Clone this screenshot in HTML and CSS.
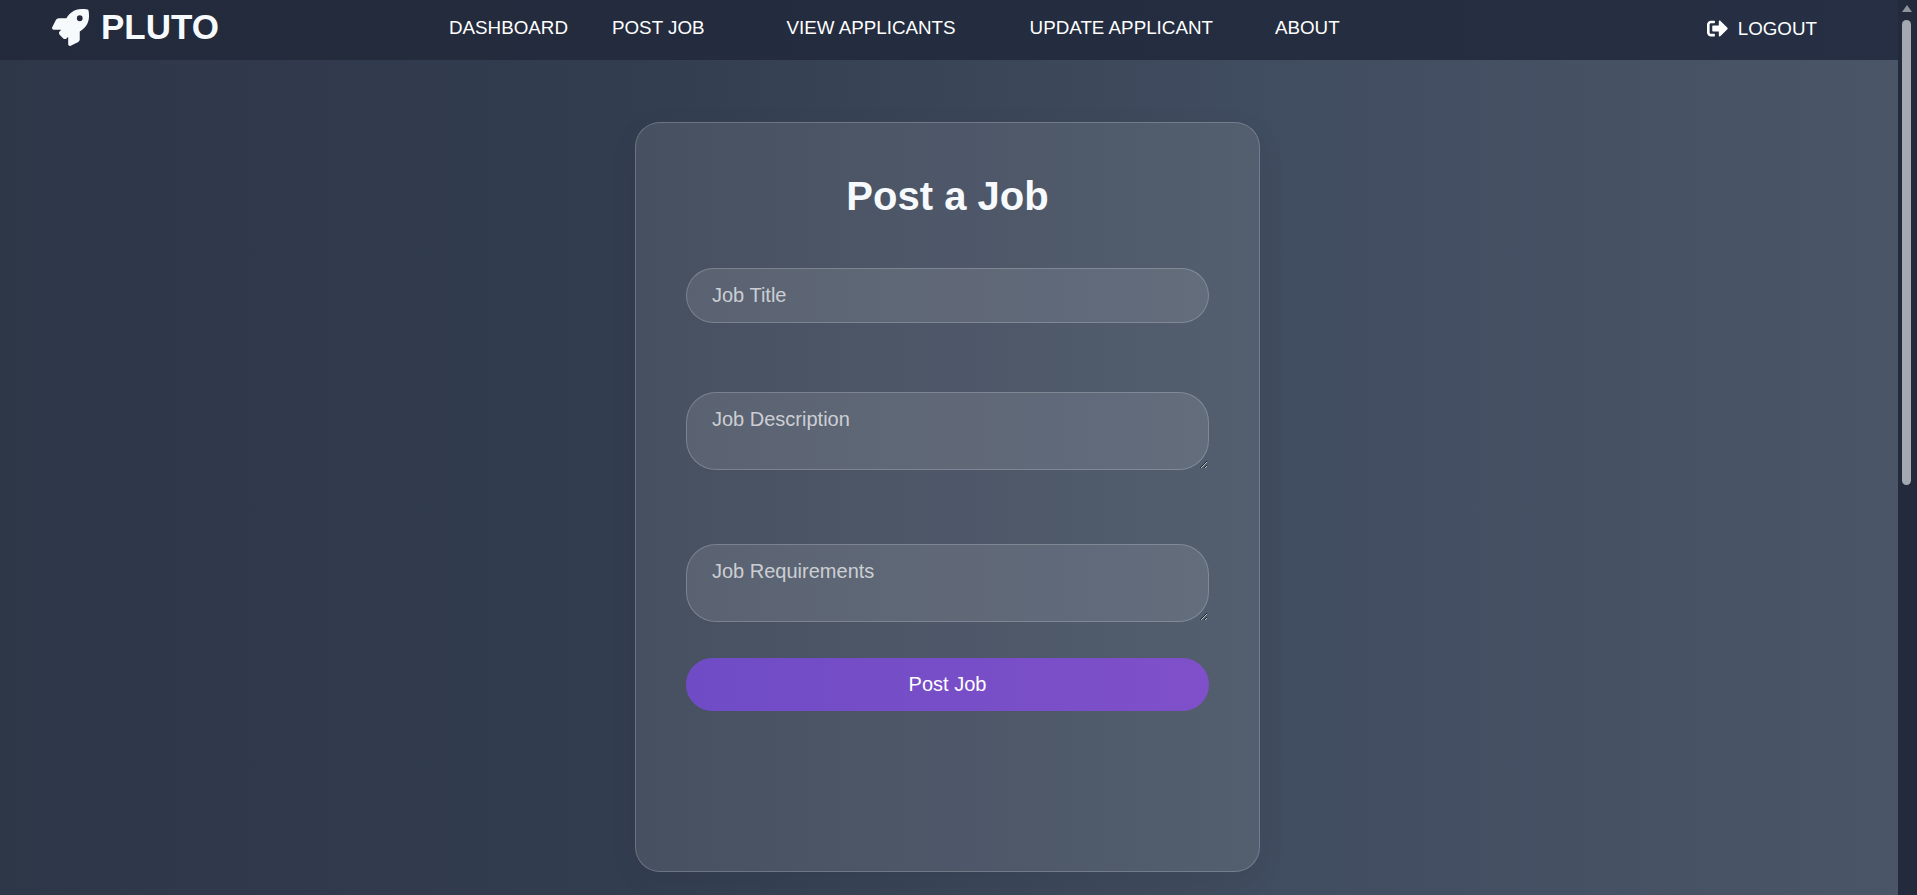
FILE: index.html
```html
<!DOCTYPE html>
<html lang="en">
<head>
    <meta charset="UTF-8">
    <meta name="viewport" content="width=device-width, initial-scale=1.0">
    <title>Post a Job</title>
    <link rel="stylesheet" href="styles.css">
</head>
<body>
    <div class="page">
        <nav class="navbar">
            <a class="brand" href="#">
                <svg class="brand-icon" viewBox="0 0 512 512"><path d="M505.12 19.09c-1.19-5.53-6.66-11-12.21-12.19C460.72 0 435.51 0 410.41 0 307.18 0 245.27 55.2 199.05 128H94.84c-16.35.02-35.56 11.88-42.89 26.48L2.52 253.3A28.4 28.4 0 0 0 0 264a24 24 0 0 0 24.01 24h103.81l-22.47 22.47c-11.37 11.36-13 32.26 0 45.25l50.9 50.91c11.16 11.19 32.16 13.16 45.28 0l22.47-22.47V488a24 24 0 0 0 24.01 24 28.56 28.56 0 0 0 10.71-2.52l98.73-49.39c14.63-7.3 26.51-26.5 26.51-42.86V312.8c72.6-46.31 128.03-108.41 128.03-211.1.03-25.2.03-50.4-6.92-82.61zM384.04 168a40 40 0 1 1 40.01-40 40 40 0 0 1-40.01 40z"/></svg>
                PLUTO
            </a>
            <ul class="nav-links">
                <li><a href="#">DASHBOARD</a></li>
                <li class="nav-post"><a href="#">POST JOB</a></li>
                <li class="nav-view"><a href="#">VIEW APPLICANTS</a></li>
                <li class="nav-update"><a href="#">UPDATE APPLICANT</a></li>
                <li class="nav-about"><a href="#">ABOUT</a></li>
            </ul>
            <a class="logout" href="#">
                <svg class="logout-icon" viewBox="0 0 512 512"><path d="M497 273L329 441c-15 15-41 4.5-41-17v-96H152c-13.3 0-24-10.7-24-24v-96c0-13.3 10.7-24 24-24h136V88c0-21.4 25.9-32 41-17l168 168c9.3 9.4 9.3 24.6 0 34zM192 436v-40c0-6.6-5.4-12-12-12H96c-17.7 0-32-14.3-32-32V160c0-17.7 14.3-32 32-32h84c6.6 0 12-5.4 12-12V76c0-6.6-5.4-12-12-12H96c-53 0-96 43-96 96v192c0 53 43 96 96 96h84c6.6 0 12-5.4 12-12z"/></svg>
                LOGOUT
            </a>
        </nav>

        <main class="content">
            <div class="card">
                <h1>Post a Job</h1>
                <form>
                    <input class="field" type="text" placeholder="Job Title">
                    <textarea class="field area" rows="2" placeholder="Job Description"></textarea>
                    <textarea class="field area" rows="2" placeholder="Job Requirements"></textarea>
                    <button class="submit" type="button">Post Job</button>
                </form>
            </div>
        </main>
    </div>

    <div class="scrollbar">
        <div class="scroll-arrow"></div>
        <div class="scroll-thumb"></div>
    </div>
</body>
</html>
```

FILE: styles.css
```css
* {
    box-sizing: border-box;
}

body {
    display: flex;
    margin: 0;
    height: 100vh;
    overflow: hidden;
    font-family: "Liberation Sans", Arial, sans-serif;
    color: #f7fafc;
}

a {
    color: #fff;
    text-decoration: none;
}

.page {
    flex: 1;
    background: linear-gradient(to right, #2d3748 0%, #333d50 33%, #404c5f 66%, #4a5568 100%);
}

.navbar {
    display: flex;
    align-items: center;
    height: 60px;
    padding: 0 81px 6px 52px;
    background: linear-gradient(to right, #222a3b, #262f43);
}

.brand {
    display: flex;
    align-items: center;
    gap: 12px;
    width: 397px;
    font-size: 35px;
    font-weight: bold;
    color: #f7fafc;
}

.brand-icon {
    width: 37px;
    height: 37px;
    fill: #f7fafc;
}

.nav-links {
    display: flex;
    flex: 1;
    list-style: none;
    margin: 1px 0 0;
    padding: 0;
    font-size: 18.8px;
}

.nav-post {
    margin-left: 44px;
}

.nav-view {
    margin-left: 82px;
}

.nav-update {
    margin-left: 74px;
}

.nav-about {
    margin-left: 62px;
}

.logout {
    display: flex;
    align-items: center;
    gap: 10px;
    margin-top: 3px;
    font-size: 18.8px;
}

.logout-icon {
    width: 21px;
    height: 21px;
    fill: #fff;
}

.content {
    display: flex;
    justify-content: center;
    padding: 62px 3px 0 0;
}

.card {
    width: 625px;
    height: 750px;
    padding: 50px;
    background-color: rgba(255, 255, 255, 0.1);
    border: 1px solid rgba(255, 255, 255, 0.2);
    border-radius: 25px;
    box-shadow: 0 8px 32px rgba(0, 0, 0, 0.05);
}

h1 {
    margin: 0 0 49px;
    font-size: 40px;
    line-height: 46px;
    text-align: center;
    color: #f7fafc;
}

.field {
    display: block;
    width: 100%;
    height: 55px;
    margin-bottom: 69px;
    padding: 0 25px;
    font-family: inherit;
    font-size: 20px;
    color: #fff;
    background-color: rgba(255, 255, 255, 0.1);
    border: 1px solid rgba(255, 255, 255, 0.2);
    border-radius: 30px;
}

.field::placeholder {
    color: rgba(255, 255, 255, 0.7);
}

.area {
    height: 78px;
    margin-bottom: 74px;
    padding: 15px 25px;
}

.area:last-of-type {
    margin-bottom: 36px;
}

.submit {
    display: block;
    width: 100%;
    height: 53px;
    font-family: inherit;
    font-size: 20px;
    color: #fff;
    background: linear-gradient(90deg, #6f4cc6, #7f50c9);
    border: none;
    border-radius: 30px;
}

.scrollbar {
    width: 19px;
    padding: 5px 6px 0 4px;
    background-color: #222a3b;
}

.scroll-arrow {
    width: 0;
    height: 7px;
    margin: 0 auto 8px;
    border: 5px solid transparent;
    border-top: none;
    border-bottom: 7px solid #8e939c;
}

.scroll-thumb {
    height: 465px;
    background-color: #a3a8b1;
    border-radius: 5px;
}
```
